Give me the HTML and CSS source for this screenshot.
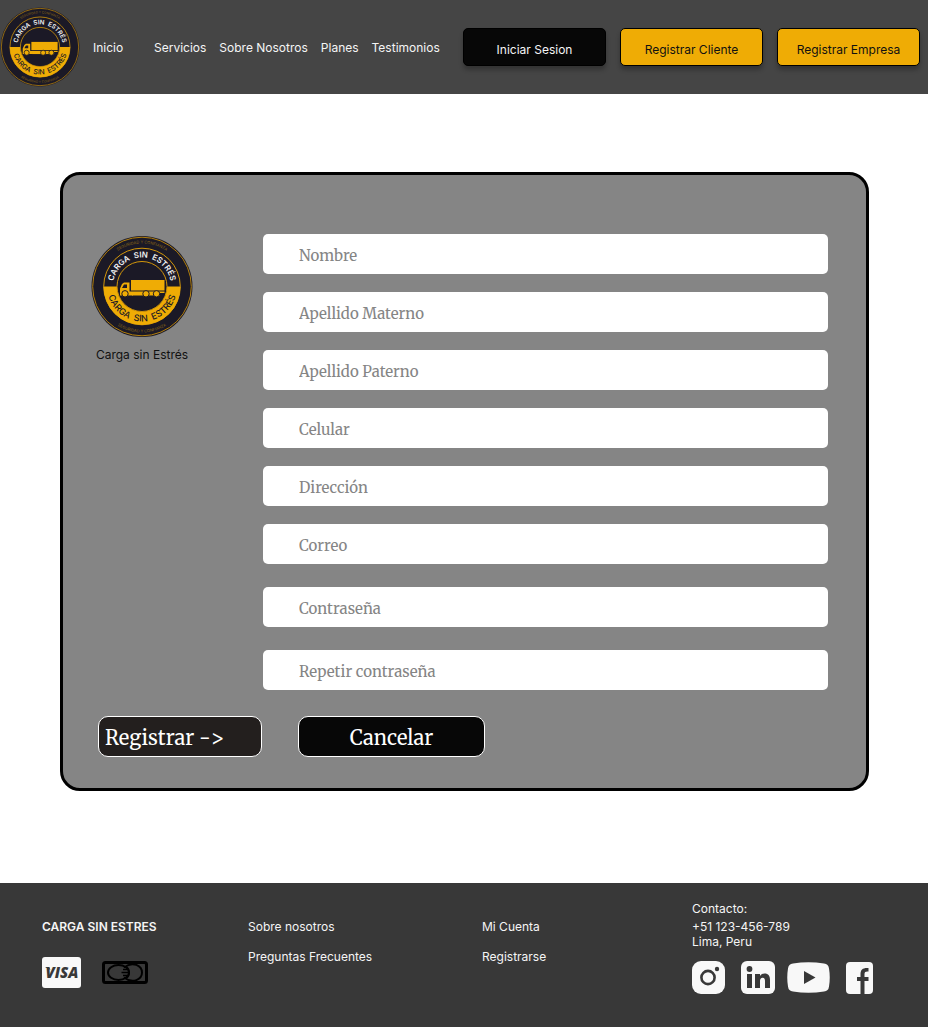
FILE: index.html
```html
<!DOCTYPE html>
<html lang="es">
<head>
<meta charset="utf-8">
<meta name="viewport" content="width=device-width, initial-scale=1">
<title>Carga sin Estrés - Registro</title>
<link rel="stylesheet" href="styles.css">
</head>
<body>
<header class="topbar">
  <svg class="topbar-logo" viewBox="-51 -51 102 102" role="img" aria-label="Carga sin Estrés">
    <defs>
      <path id="arc-top" d="M0 29A29 29 0 0 1 0-29A29 29 0 0 1 0 29"/>
      <path id="arc-bottom" d="M-35 0A35 35 0 0 0 35 0"/>
      <path id="arc-motto-top" d="M-43 0A43 43 0 0 1 43 0"/>
      <path id="arc-motto-bottom" d="M-46 0A46 46 0 0 0 46 0"/>
    </defs>
    <g id="logo">
      <circle r="50.5" fill="#1b1926"/>
      <circle r="49.3" fill="none" stroke="#b27f0c" stroke-width="1"/>
      <circle r="38.3" fill="none" stroke="#d2960a" stroke-width="1"/>
      <path d="M-38.5 0H-25A25 25 0 0 0 25 0H38.5A38.5 38.5 0 0 1-38.5 0Z" fill="#efac05"/>
      <circle r="25" fill="#1b1926" stroke="#d2960a" stroke-width="1"/>
      <g font-family="Inter, sans-serif" text-anchor="middle">
        <text font-size="8" font-weight="600" fill="#f2f2f2"><textPath href="#arc-top" startOffset="50%">CARGA&#160; SIN&#160; ESTRÉS</textPath></text>
        <text font-size="9" font-weight="500" fill="#1b1926"><textPath href="#arc-bottom" startOffset="50%">CARGA&#160; SIN&#160; ESTRÉS</textPath></text>
        <g font-size="4" fill="#8c6714">
          <text><textPath href="#arc-motto-top" startOffset="50%">SEGURIDAD Y CONFIANZA</textPath></text>
          <text><textPath href="#arc-motto-bottom" startOffset="50%">SEGURIDAD Y CONFIANZA</textPath></text>
        </g>
      </g>
      <g fill="#efac05">
        <path d="M-11-6.5H22.5V4H-11Z"/>
        <path d="M-22 7V2L-20-2.5-18-4H-12.5V5H22.5V6.5H-9V9H-22ZM-20 1.5H-15V-2H-18Z" fill-rule="evenodd"/>
        <path d="M-10 6H18V9H-10Z"/>
        <g stroke="#1b1926">
          <circle cx="-17" cy="7.3" r="3.2"/>
          <circle cx="4" cy="7.3" r="3.2"/>
          <circle cx="14.5" cy="7.3" r="3.2"/>
        </g>
      </g>
    </g>
  </svg>
  <nav class="nav">
    <a class="nav-home" href="#">Inicio</a>
    <a href="#">Servicios</a>
    <a href="#">Sobre Nosotros</a>
    <a href="#">Planes</a>
    <a href="#">Testimonios</a>
  </nav>
  <div class="topbar-actions">
    <button class="action action-dark" type="button">Iniciar Sesion</button>
    <button class="action" type="button">Registrar Cliente</button>
    <button class="action" type="button">Registrar Empresa</button>
  </div>
</header>

<main class="main">
  <form class="card">
    <div class="card-body">
      <div class="brand">
        <svg class="brand-logo" viewBox="-51 -51 102 102" aria-hidden="true"><use href="#logo"/></svg>
        <span>Carga sin Estrés</span>
      </div>
      <div class="fields">
        <div class="group">
          <input class="field" type="text" placeholder="Nombre" aria-label="Nombre">
          <input class="field" type="text" placeholder="Apellido Materno" aria-label="Apellido Materno">
          <input class="field" type="text" placeholder="Apellido Paterno" aria-label="Apellido Paterno">
          <input class="field" type="tel" placeholder="Celular" aria-label="Celular">
          <input class="field" type="text" placeholder="Dirección" aria-label="Dirección">
          <input class="field" type="email" placeholder="Correo" aria-label="Correo">
        </div>
        <div class="group group-password">
          <input class="field" type="password" placeholder="Contraseña" aria-label="Contraseña">
          <input class="field" type="password" placeholder="Repetir contraseña" aria-label="Repetir contraseña">
        </div>
      </div>
    </div>
    <div class="card-actions">
      <button class="submit" type="submit">Registrar -&gt;</button>
      <button class="cancel" type="reset">Cancelar</button>
    </div>
  </form>
</main>

<footer class="footer">
  <section class="footer-col">
    <h2 class="footer-title">CARGA SIN ESTRES</h2>
    <div class="payments">
      <svg width="39" height="31" viewBox="0 0 39 31" role="img" aria-label="Visa">
        <rect width="39" height="31" rx="3" fill="#f8f8f8"/>
        <path d="M3 10H7L8.5 13Z" fill="#383838"/>
        <text x="20" y="21" text-anchor="middle" font-family="Open Sans, sans-serif" font-size="15" font-weight="800" font-style="italic" fill="#383838">VISA</text>
      </svg>
      <svg width="46" height="23" viewBox="0 0 46 23" fill="none" stroke="#000" role="img" aria-label="Mastercard">
        <rect x="1.5" y="1.5" width="43" height="20" rx="2" stroke-width="3"/>
        <ellipse cx="16.5" cy="11.5" rx="10.5" ry="7.5" stroke-width="2"/>
        <path d="M22 6.500C31-.5 40 5 40 11.500S31 23.500 22 16.500" stroke-width="2"/>
        <path d="M25 6C28 9 28 14 25 17M21 8.500H26M19.500 11.500H26M21 14.500H26" stroke-width="1.500"/>
      </svg>
    </div>
  </section>
  <nav class="footer-col footer-links">
    <a href="#">Sobre nosotros</a>
    <a href="#">Preguntas Frecuentes</a>
  </nav>
  <nav class="footer-col footer-links">
    <a href="#">Mi Cuenta</a>
    <a href="#">Registrarse</a>
  </nav>
  <section class="contact">
    <p class="contact-title">Contacto:</p>
    <p>+51 123-456-789<br>Lima, Peru</p>
    <div class="social">
      <div class="social-pair">
        <a href="#" aria-label="Instagram"><svg width="33" height="33" viewBox="0 0 33 33"><rect width="33" height="33" rx="9" fill="#f8f8f8"/><circle cx="16" cy="16.500" r="6.600" fill="none" stroke="#383838" stroke-width="2.600"/><circle cx="25" cy="8" r="2.200" fill="#383838"/></svg></a>
        <a href="#" aria-label="LinkedIn"><svg width="34" height="33" viewBox="0 0 34 33"><rect width="34" height="33" rx="6" fill="#f8f8f8"/><g fill="#383838"><circle cx="8.500" cy="8" r="2.900"/><path d="M6 13H11V27H6ZM14 13H19V15C20 13.300 21.500 12.500 23.500 12.500C27.500 12.500 29 15 29 19V27H24V20C24 18 23.500 16.700 21.700 16.700C19.800 16.700 19 18 19 20V27H14Z"/></g></svg></a>
      </div>
      <div class="social-pair">
        <a href="#" aria-label="YouTube"><svg width="43" height="31" viewBox="0 0 43 31"><path d="M6 1.500Q21.500-1 37 1.500Q41.500 2 42 6.500Q43.500 15.500 42 24.500Q41.500 29 37 29.500Q21.500 32 6 29.500Q1.500 29 1 24.500Q-.5 15.500 1 6.500Q1.500 2 6 1.500Z" fill="#f8f8f8"/><path d="M17 9V22L28.500 15.500Z" fill="#383838"/></svg></a>
        <a href="#" aria-label="Facebook"><svg width="27" height="32" viewBox="0 0 27 32"><rect width="27" height="32" rx="4" fill="#f8f8f8"/><path d="M14.500 32V19H11V15H14.500V12C14.500 7.500 17 5.500 22.500 6V9.500C19.500 9.300 18.500 10 18.500 12V15H22.500V19H18.500V32Z" fill="#383838"/></svg></a>
      </div>
    </div>
  </section>
</footer>
</body>
</html>
```
FILE: styles.css
```css
* {
  box-sizing: border-box;
}

body {
  margin: 0;
  min-height: 100vh;
  display: flex;
  flex-direction: column;
  background: #fff;
  font-family: Inter, sans-serif;
  font-size: 12px;
  line-height: 15px;
}

a {
  color: inherit;
  text-decoration: none;
}

p {
  margin: 0;
}

button,
input {
  font: inherit;
}

.topbar {
  display: flex;
  align-items: center;
  min-height: 94px;
  padding-right: 8px;
  background: #454545;
  color: #f5f5f5;
}

.topbar-logo {
  flex: none;
  width: 80px;
  height: 80px;
}

.nav {
  display: flex;
  gap: 13px;
  padding-left: 13px;
  white-space: nowrap;
}

.nav-home {
  width: 48px;
}

.topbar-actions {
  display: flex;
  gap: 14px;
  margin-left: auto;
}

.action {
  width: 143px;
  height: 38px;
  padding: 4px 0 0;
  border: 1px solid #000;
  border-radius: 5px;
  background: #efac05;
  color: #111;
  box-shadow: 0 4px 4px rgba(0, 0, 0, 0.25);
}

.action-dark {
  background: #070707;
  color: #f5f5f5;
}

.main {
  flex: 1;
  padding: 78px 59px 92px 60px;
}

.card {
  padding: 59px 38px 31px 28px;
  border: 3px solid #000;
  border-radius: 20px;
  background: #858585;
  font-family: Merriweather, "DejaVu Serif Condensed", "DejaVu Serif", serif;
}

.card-body {
  display: flex;
  gap: 70px;
}

.brand {
  flex: none;
  width: 102px;
  display: flex;
  flex-direction: column;
  align-items: center;
  gap: 8px;
  font-family: Inter, sans-serif;
  color: #111;
  white-space: nowrap;
}

.brand-logo {
  width: 102px;
  height: 105px;
}

.fields {
  flex: 1;
  display: grid;
  gap: 23px;
}

.group {
  display: grid;
  gap: 18px;
}

.group-password {
  gap: 23px;
}

.field {
  width: 100%;
  height: 40px;
  padding: 2px 36px 0;
  border: 0;
  border-radius: 5px;
  background: #fff;
  color: #333;
  font-size: 15px;
}

.field::placeholder {
  color: #858585;
  opacity: 1;
}

.card-actions {
  display: flex;
  gap: 36px;
  margin-top: 26px;
  padding-left: 7px;
}

.submit,
.cancel {
  height: 41px;
  padding: 2px 6px 0;
  border: 1px solid #fff;
  border-radius: 10px;
  color: #fff;
  font-size: 20px;
}

.submit {
  width: 164px;
  background: #231f1e;
  text-align: left;
}

.cancel {
  width: 187px;
  background: #070707;
}

.footer {
  display: grid;
  grid-template-columns: 206fr 234fr 210fr 194fr;
  min-height: 144px;
  padding: 18px 42px 0;
  background: #383838;
  color: #f5f5f5;
}

.footer-col {
  padding-top: 18px;
}

.footer-title {
  margin: 0 0 23px;
  font-size: 12px;
  font-weight: 600;
  line-height: 15px;
}

.payments {
  display: flex;
  align-items: center;
  gap: 21px;
}

.footer-links {
  display: flex;
  flex-direction: column;
  gap: 15px;
}

.contact-title {
  margin-bottom: 3px;
}

.social {
  display: flex;
  gap: 12px;
  margin-top: 12px;
}

.social-pair {
  display: flex;
  align-items: center;
  gap: 16px;
}

.social svg {
  display: block;
}
```
